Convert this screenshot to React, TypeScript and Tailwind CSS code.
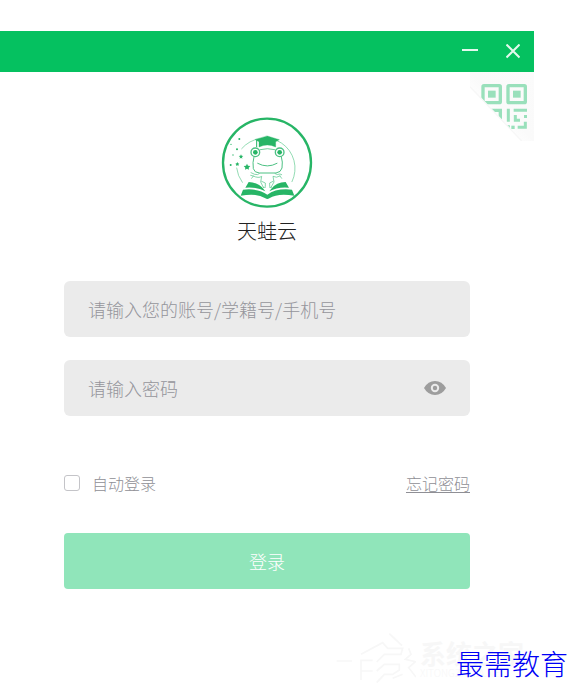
import React, { useState } from 'react';

function FrogLogo() {
  return (
    <svg
      viewBox="35 35 276 276"
      className="w-[92px] h-[92px]"
      fill="none"
      stroke="#27b566"
      strokeLinecap="round"
      strokeLinejoin="round"
      role="img"
      aria-label="天蛙云"
    >
      <circle cx="173" cy="172" r="132" strokeWidth="7" />
      {/* inner ring */}
      <path d="M97 130 A91 91 0 0 1 248 229" strokeWidth="2" stroke="#5cc88d" />
      <path d="M82 188 A91 91 0 0 0 99 231" strokeWidth="2" stroke="#5cc88d" />
      {/* cap */}
      <path d="M174 92 L210 103 L199 109 L199 125 Q174 113 149 125 L149 109 L138 103 Z" fill="#27b566" strokeWidth="1" />
      <path d="M142 105 V124" strokeWidth="3" />
      {/* head */}
      <path d="M134 154 Q129 172 132 190 Q135 202 150 203 L200 203 Q215 201 218 188 Q221 170 216 154" strokeWidth="3" stroke="#4cc183" />
      <path d="M152 133 Q174 127 197 133" strokeWidth="2" />
      <circle cx="138" cy="141" r="13" strokeWidth="4" stroke="#4cc183" />
      <circle cx="138" cy="141" r="7" fill="#27b566" stroke="none" />
      <circle cx="211" cy="141" r="13" strokeWidth="4" stroke="#4cc183" />
      <circle cx="211" cy="141" r="7" fill="#27b566" stroke="none" />
      <path d="M145 174 Q174 190 203 174" strokeWidth="3" stroke="#4cc183" />
      {/* body and arms */}
      <g strokeWidth="2" stroke="#4cc183">
        <path d="M150 205 Q146 210 136 207 L125 202 M124 210 L132 212 L127 219 M132 212 Q148 220 157 213 L154 230 L162 246" />
        <path d="M197 205 Q203 210 212 206 L217 208 M212 212 L217 219 M212 212 Q201 219 191 213 L194 230 L185 246" />
        <path d="M157 228 L168 233 V243 M191 228 L181 233 V243 M162 246 H168 M181 246 H186" />
      </g>
      {/* book */}
      <g fill="#27b566" stroke="none">
        <path d="M118 230 Q146 231 162 250 L168 258 Q142 244 108 247 Z" />
        <path d="M229 230 Q201 231 186 250 L180 258 Q204 244 239 247 Z" />
        <path d="M101 253 Q147 248 174 268 Q201 248 248 253 L255 271 Q205 262 180 279 Q174 283 168 279 Q143 262 94 271 Z" />
      </g>
      {/* stars */}
      <g fill="#27b566" stroke="none">
        <path d="M113 175 L116 181 L123 182 L118 187 L119 193 L113 190 L107 193 L108 187 L103 182 L110 181 Z" />
        <path d="M95 147 L97 151 L102 152 L98 155 L99 160 L95 157 L91 160 L92 155 L88 152 L93 151 Z" />
        <path d="M84 170 L86 174 L90 175 L87 178 L88 182 L84 180 L80 182 L81 178 L78 175 L82 174 Z" />
        <circle cx="90" cy="101" r="3" />
        <circle cx="65" cy="117" r="2" />
        <circle cx="83" cy="132" r="3" />
        <circle cx="71" cy="149" r="2" />
        <circle cx="64" cy="179" r="3" />
      </g>
    </svg>
  );
}

function QrCorner() {
  return (
    <svg viewBox="90 141 192 207" className="w-16 h-[69px]">
      <defs>
        <clipPath id="fold">
          <path d="M90 141 H282 V348 H245 L90 185 Z" />
        </clipPath>
        <linearGradient id="shade" x1="0" y1="1" x2="1" y2="0">
          <stop offset="0.3" stopColor="#fff" />
          <stop offset="0.5" stopColor="#fafafa" />
          <stop offset="1" stopColor="#fbfbfb" />
        </linearGradient>
      </defs>
      <g clipPath="url(#fold)">
        <rect x="90" y="141" width="192" height="207" fill="url(#shade)" />
        <g fill="none" stroke="#99e0bb" strokeWidth="10">
          <rect x="129" y="182" width="52" height="51" rx="3" />
          <rect x="204" y="182" width="52" height="51" rx="3" />
          <path d="M129 256 H181 V310 H129 Z" />
        </g>
        <g fill="none" stroke="#99e0bb" strokeWidth="9">
          <path d="M205 251 V290 M205 301 V312" />
          <path d="M221 256 H261 M226 270 V286 H240 M233 307 H256 V290" />
        </g>
        <g fill="#99e0bb">
          <rect x="144" y="197" width="23" height="21" />
          <rect x="219" y="197" width="23" height="21" />
          <rect x="144" y="272" width="23" height="21" />
          <rect x="252" y="270" width="9" height="9" />
          <rect x="214" y="302" width="10" height="10" />
        </g>
      </g>
      <path d="M90 185 L245 348" stroke="#f7f7f7" strokeWidth="4" />
    </svg>
  );
}

function EyeIcon() {
  return (
    <svg viewBox="0 0 22 14" className="w-[22px] h-[14px]">
      <path d="M0 7 Q4 0 11 0 Q18 0 22 7 Q18 14 11 14 Q4 14 0 7 Z" fill="#9d9d9d" />
      <circle cx="11" cy="7" r="3.2" fill="#9d9d9d" stroke="#ebebeb" strokeWidth="2" />
    </svg>
  );
}

function Watermark() {
  return (
    <div className="flex items-center gap-1 text-[#f7f7f7]">
      <svg viewBox="50 30 240 165" className="w-20 h-[55px]" fill="none" stroke="currentColor" strokeWidth="5">
        <path d="M52 120 H98 M125 100 L190 65 L205 82 H250 L245 100 H195 L172 123 M210 38 L248 74" />
        <path d="M125 177 V118 H160 M125 150 H160 M172 150 L195 130 H240 V147 L220 160 H195 L172 185 M220 172 L250 160" />
        <path d="M268 82 L275 100 L258 115 L288 122 L268 140 L290 168" />
      </svg>
      <div>
        <div className="text-[26px] leading-7 font-bold">系统之家</div>
        <div className="text-[10px] leading-3">XITONGZHIJIA.NET</div>
      </div>
    </div>
  );
}

export default function App() {
  const [account, setAccount] = useState('');
  const [password, setPassword] = useState('');
  const [visible, setVisible] = useState(false);

  return (
    <div className="bg-white pt-[31px] font-['Noto_Sans_CJK_SC',sans-serif] font-light">
      <div className="relative mr-[42px]">
        {/* Title bar */}
        <header className="h-[41px] bg-[#05c160] flex items-center justify-end gap-7 pr-[14px]">
          <button type="button" aria-label="最小化" className="w-4 h-4">
            <svg viewBox="0 0 16 16" stroke="#e4f9ed" strokeWidth="2">
              <path d="M0 6 H16" />
            </svg>
          </button>
          <button type="button" aria-label="关闭" className="w-[14px] h-4">
            <svg viewBox="0 0 14 16" stroke="#e4f9ed" strokeWidth="2">
              <path d="M0.5 0.5 L13.5 13.5 M13.5 0.5 L0.5 13.5" />
            </svg>
          </button>
        </header>

        <button type="button" aria-label="扫码登录" className="absolute right-0 top-[41px]">
          <QrCorner />
        </button>

        {/* Logo */}
        <div className="flex flex-col items-center pt-[45px]">
          <FrogLogo />
          <h1 className="mt-2 text-xl leading-7 text-[#222] font-light">天蛙云</h1>
        </div>

        {/* Login form */}
        <form className="px-16 pt-9" onSubmit={(e) => e.preventDefault()}>
          <input
            type="text"
            aria-label="账号"
            placeholder="请输入您的账号/学籍号/手机号"
            value={account}
            onChange={(e) => setAccount(e.target.value)}
            className="block w-full h-14 rounded-md bg-[#ebebeb] px-6 text-lg text-[#333] placeholder:text-[#95959b] outline-none"
          />

          <div className="relative mt-[23px]">
            <input
              type={visible ? 'text' : 'password'}
              aria-label="密码"
              placeholder="请输入密码"
              value={password}
              onChange={(e) => setPassword(e.target.value)}
              className="block w-full h-14 rounded-md bg-[#ebebeb] px-6 text-lg text-[#333] placeholder:text-[#95959b] outline-none"
            />
            <button
              type="button"
              aria-label="显示密码"
              onClick={() => setVisible(!visible)}
              className="absolute inset-y-0 right-6 flex items-center"
            >
              <EyeIcon />
            </button>
          </div>

          <div className="mt-[55px] flex items-center justify-between text-base text-[#8f8f95]">
            <label className="flex items-center gap-3">
              <input
                type="checkbox"
                className="appearance-none w-4 h-4 rounded-[3px] border border-[#c4c4c8] bg-white checked:bg-[#05c160]"
              />
              自动登录
            </label>
            <a href="#forgot" className="underline underline-offset-2">忘记密码</a>
          </div>

          <button type="submit" className="mt-[38px] w-full h-14 rounded-sm bg-[#90e5ba] text-lg text-white">
            登录
          </button>
        </form>
      </div>

      {/* Footer marks */}
      <footer className="relative mt-[42px] flex justify-end pr-[52px]">
        <Watermark />
        <p className="absolute right-2 top-4 text-[28px] leading-8 font-light text-[#0000f5]">最需教育</p>
      </footer>
    </div>
  );
}
